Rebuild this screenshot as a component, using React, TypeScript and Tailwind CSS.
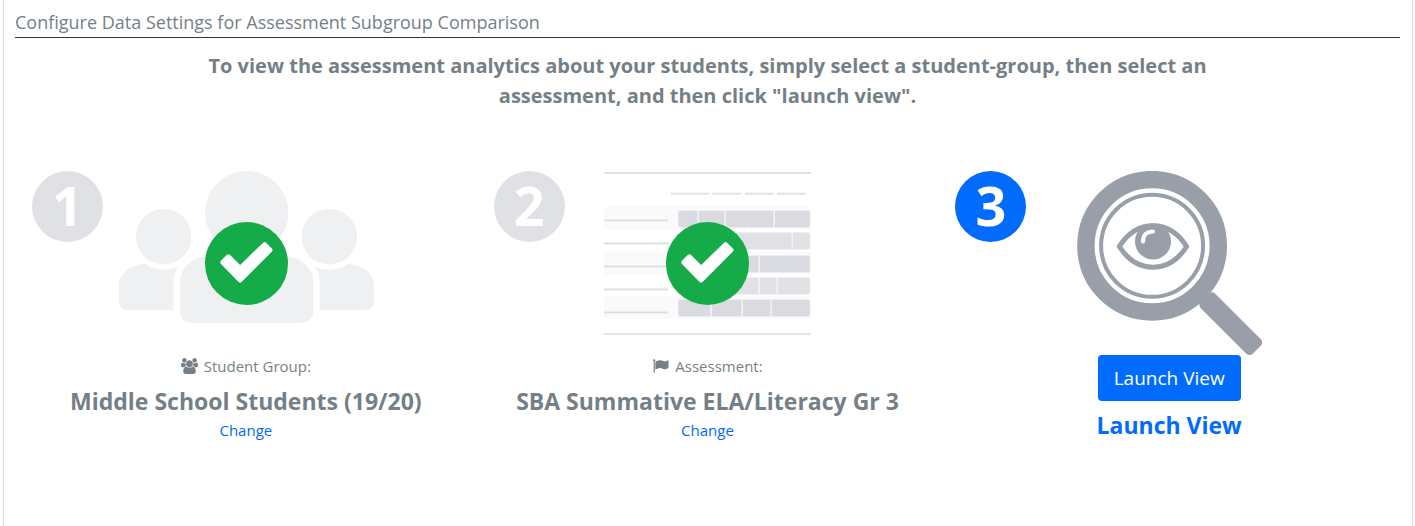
import type { ReactNode } from 'react';

const barRows = [
  { y: 39, start: 74, fill: '#dadbe0', dividers: [94, 121, 170] },
  { y: 61, start: 90, fill: '#e0e1e5', dividers: [188] },
  { y: 84, start: 90, fill: '#dadbe0', dividers: [155] },
  { y: 106, start: 90, fill: '#e0e1e5', dividers: [155, 173] },
  { y: 128, start: 74, fill: '#dadbe0', dividers: [107, 138, 167] },
];

const headerLines = [
  { x: 67, width: 38 },
  { x: 108, width: 29 },
  { x: 141, width: 29 },
  { x: 173, width: 29 },
];

function PeoplePicture() {
  const sideBody =
    'M26 93 A33.5 33.5 0 0 0 59 95.7 Q54.3 102 54.3 112 V139.3 H10 Q0 139.3 0 129 V115 C0 103 10 94 26 93Z';
  return (
    <svg width="255" height="152" viewBox="0 0 255 152" fill="#eff0f2" aria-hidden="true">
      <circle cx="127.7" cy="41.7" r="41.7" />
      <path d="M87 85.5 H168 C184 87 194.3 98 194.3 112 V139 Q194.3 152 181 152 H74 Q61 152 61 139 V112 C61 98 71 87 87 85.5Z" />
      <circle cx="44.7" cy="65.7" r="27.7" />
      <circle cx="210.3" cy="65.7" r="27.7" />
      <path d={sideBody} />
      <path d={sideBody} transform="translate(255 0) scale(-1 1)" />
    </svg>
  );
}

function TablePicture() {
  return (
    <svg width="207" height="164" viewBox="0 0 207 164" aria-hidden="true">
      <rect y="1" width="207" height="2" fill="#e0e1e5" />
      <rect y="162" width="207" height="2" fill="#e4e5e8" />
      {headerLines.map((line) => (
        <rect key={line.x} x={line.x} y="21.7" width={line.width} height="2" fill="#e0e1e5" />
      ))}
      {[36, 81, 125].map((y) => (
        <rect key={y} y={y} width="207" height="22.5" fill="#fafafa" />
      ))}
      {[48.5, 71.5, 94.5, 117.5, 140.5].map((y) => (
        <rect key={y} y={y} width="64" height="1.8" fill="#dcdde1" />
      ))}
      {barRows.map((row) => (
        <g key={row.y}>
          <rect x={row.start} y={row.y + 0.3} width={206.3 - row.start} height="17.4" rx="2.5" fill="#e9eaed" />
          <rect x={row.start + 0.7} y={row.y + 1} width={205 - row.start} height="16" rx="2" fill={row.fill} />
          {row.dividers.map((x) => (
            <rect key={x} x={x - 0.5} y={row.y + 0.3} width="1.4" height="17.4" fill="#f6f6f8" />
          ))}
        </g>
      ))}
    </svg>
  );
}

function MagnifierPicture() {
  return (
    <svg width="185" height="184" viewBox="0 0 185 184" fill="none" aria-hidden="true">
      <circle cx="75.1" cy="74.8" r="66.2" stroke="#989fa8" strokeWidth="17.4" />
      <circle cx="75.1" cy="74.8" r="51" stroke="#989fa8" strokeWidth="4" />
      <rect x="180" y="-11" width="73.5" height="20.5" rx="4.5" transform="rotate(45)" fill="#989fa8" />
      <path
        d="M42.3 75.5 C51 62 63 54.8 76 54.8 C89 54.8 101 62 109.7 75.5 C101 89 89 96.2 76 96.2 C63 96.2 51 89 42.3 75.5Z"
        stroke="#989fa8"
        strokeWidth="5"
        strokeLinejoin="round"
      />
      <circle cx="76" cy="70.5" r="18" fill="#989fa8" />
      <path d="M66 70.5 C66 64 70 60.5 76 60.5" stroke="#fff" strokeWidth="4.2" strokeLinecap="round" />
    </svg>
  );
}

function CheckMark() {
  return (
    <svg
      className="absolute inset-x-0 top-[51px] mx-auto"
      width="83"
      height="83"
      viewBox="0 0 84 84"
      role="img"
      aria-label="Done"
    >
      <circle cx="42" cy="42" r="42" fill="#16ab49" />
      <path
        d="M18 40.7 L23.7 35.2 L35.5 47 L60.3 23 L65.8 28.3 L35.5 58.6Z"
        fill="#fff"
        stroke="#fff"
        strokeWidth="5"
        strokeLinejoin="round"
      />
    </svg>
  );
}

function UsersIcon() {
  return (
    <svg className="w-[17px] h-4" viewBox="64 0 1920 1792" fill="currentColor" aria-hidden="true">
      <path d="M657 896q-162 5-265 128h-134q-82 0-138-40.5t-56-118.5q0-353 124-353 6 0 43.5 21t97.5 42.5 119 21.5q67 0 133-23-5 37-5 66 0 139 81 256zm1071 637q0 120-73 189.5t-194 69.5h-874q-121 0-194-69.5t-73-189.5q0-53 3.5-103.5t14-109 26.5-108.5 43-97.5 62-81 85.5-53.5 111.5-20q10 0 43 21.5t73 48 107 48 135 21.5 135-21.5 107-48 73-48 43-21.5q61 0 111.5 20t85.5 53.5 62 81 43 97.5 26.5 108.5 14 109 3.5 103.5zm-1024-1277q0 106-75 181t-181 75-181-75-75-181 75-181 181-75 181 75 75 181zm704 384q0 159-112.5 271.5t-271.5 112.5-271.5-112.5-112.5-271.5 112.5-271.5 271.5-112.5 271.5 112.5 112.5 271.5zm576 225q0 78-56 118.5t-138 40.5h-134q-103-123-265-128 81-117 81-256 0-29-5-66 66 23 133 23 59 0 119-21.5t97.5-42.5 43.5-21q124 0 124 353zm-128-609q0 106-75 181t-181 75-181-75-75-181 75-181 181-75 181 75 75 181z" />
    </svg>
  );
}

function FlagIcon() {
  return (
    <svg className="w-[17px] h-4" viewBox="0 0 1792 1792" fill="currentColor" aria-hidden="true">
      <path d="M320 256q0 72-64 110v1266q0 13-9.5 22.5t-22.5 9.5h-64q-13 0-22.5-9.5t-9.5-22.5v-1266q-64-38-64-110 0-53 37.5-90.5t90.5-37.5 90.5 37.5 37.5 90.5zm1472 64v763q0 25-12.5 38.5t-39.5 27.5q-215 116-369 116-61 0-123.5-22t-108.5-48-115.5-48-142.5-22q-192 0-464 146-17 9-33 9-26 0-45-19t-19-45v-742q0-32 31-55 21-14 79-43 236-120 421-120 107 0 200 29t219 88q38 19 88 19 54 0 117.5-21t110-47 88-47 54.5-21q26 0 45 19t19 45z" />
    </svg>
  );
}

type StepProps = {
  number: number;
  picture: ReactNode;
  done?: boolean;
  children: ReactNode;
};

function Step({ number, picture, done, children }: StepProps) {
  return (
    <section className="px-4 text-center">
      <div className="grid grid-cols-[72px_1fr_71px] h-[184px]">
        <div
          className={`justify-self-end w-[71px] h-[71px] pb-1 rounded-full flex items-center justify-center text-white text-[54px] leading-none font-bold ${
            done ? 'bg-[#e0e1e5]' : 'bg-[#006bfc]'
          }`}
        >
          {number}
        </div>
        <div className="relative flex justify-center items-start">
          {picture}
          {done && <CheckMark />}
        </div>
      </div>
      {children}
    </section>
  );
}

type SelectionProps = {
  icon: ReactNode;
  label: string;
  value: string;
};

function Selection({ icon, label, value }: SelectionProps) {
  return (
    <>
      <div className="flex items-center justify-center gap-1.5 h-[22px] text-[15px]">
        {icon}
        <span>{label}</span>
      </div>
      <h3 className="mt-[9px] text-[23px] leading-[30px] font-bold">{value}</h3>
      <a href="#" className="block w-fit mx-auto text-[15px] leading-7 text-[#006bfc]">
        Change
      </a>
    </>
  );
}

export default function App() {
  return (
    <div className="min-h-screen bg-white pl-[3px] pr-0.5 flex font-['Open_Sans',sans-serif] text-[#747f87]">
      <main className="flex-1 border-x border-[#dcdddf] pl-[11px] pr-3 pt-2">
        <h1 className="text-lg leading-7 h-[30px] border-b border-[#333]">
          Configure Data Settings for Assessment Subgroup Comparison
        </h1>
        <p className="mt-[13px] px-44 text-center text-xl leading-[30px] font-bold">
          To view the assessment analytics about your students, simply select a student-group, then select an
          assessment, and then click "launch view".
        </p>

        <div className="mt-[60px] grid grid-cols-3">
          <Step number={1} picture={<PeoplePicture />} done>
            <Selection icon={<UsersIcon />} label="Student Group:" value="Middle School Students (19/20)" />
          </Step>
          <Step number={2} picture={<TablePicture />} done>
            <Selection icon={<FlagIcon />} label="Assessment:" value="SBA Summative ELA/Literacy Gr 3" />
          </Step>
          <Step number={3} picture={<MagnifierPicture />}>
            <button type="button" className="h-[46px] px-4 rounded bg-[#006bfc] text-white text-[19px]">
              Launch View
            </button>
            <h3 className="mt-[9px] text-[23px] leading-[30px] font-bold text-[#006bfc]">Launch View</h3>
          </Step>
        </div>
      </main>
    </div>
  );
}
